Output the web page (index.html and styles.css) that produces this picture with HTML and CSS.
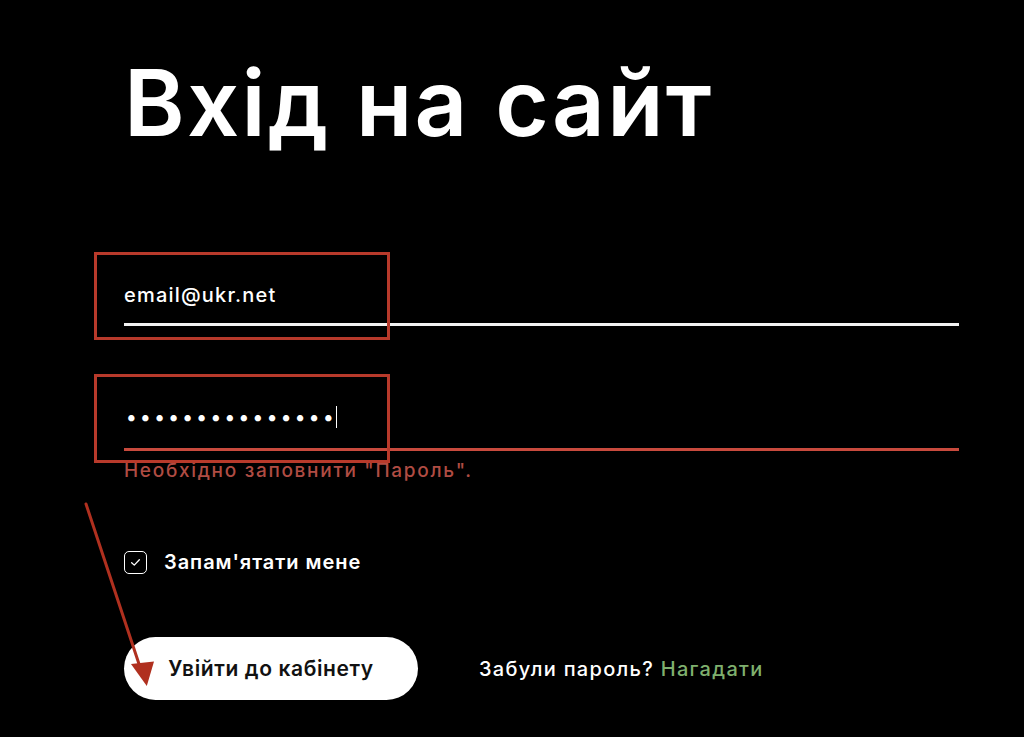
FILE: index.html
```html
<!DOCTYPE html>
<html lang="uk">
<head>
<meta charset="utf-8">
<title>Вхід на сайт</title>
<link rel="stylesheet" href="styles.css">
</head>
<body>
<main class="page">
  <h1 class="title">Вхід на сайт</h1>
  <form class="form">
    <div class="field">
      <span class="field-value">email@ukr.net</span>
    </div>
    <div class="field field-error">
      <span class="field-value password">•••••••••••••••<span class="caret"></span></span>
    </div>
    <p class="error-text">Необхідно заповнити "Пароль".</p>
    <label class="remember">
      <span class="checkbox">
        <svg viewBox="0 0 24 24" width="24" height="24"><path d="M7.6 12.2 L10.6 15 L16.4 8.9" fill="none" stroke="#fff" stroke-width="1.5" stroke-linecap="round" stroke-linejoin="round"/></svg>
      </span>
      <span class="remember-text">Запам'ятати мене</span>
    </label>
    <div class="actions">
      <button type="button" class="btn">Увійти до кабінету</button>
      <p class="forgot">Забули пароль? <a class="forgot-link" href="#">Нагадати</a></p>
    </div>
  </form>
</main>
<div class="annot annot-box annot-box-1"></div>
<div class="annot annot-box annot-box-2"></div>
<svg class="annot annot-arrow" width="1024" height="737" viewBox="0 0 1024 737">
  <line x1="86" y1="504" x2="139" y2="664" stroke="#b0301f" stroke-width="3" stroke-linecap="round"/>
  <polygon points="131,664 154,661.5 146.8,686" fill="#b0301f"/>
</svg>
</body>
</html>
```
FILE: styles.css
```css
html, body {
  margin: 0;
  padding: 0;
  background: #000;
}
body {
  width: 1024px;
  height: 737px;
  overflow: hidden;
  position: relative;
  font-family: Inter, "Noto Sans", "DejaVu Sans", sans-serif;
  color: #fff;
}
.page {
  padding: 0 65px 0 124px;
}
.title {
  margin: 57px 0 0 0;
  font-size: 92px;
  line-height: 92px;
  font-weight: 600;
  letter-spacing: 2.3px;
}
.form {
  margin-top: 134px;
}
.field {
  border-bottom: 3px solid #f2f2f2;
  padding-bottom: 16px;
}
.field-value {
  display: block;
  font-size: 20px;
  line-height: 24px;
  font-weight: 500;
  height: 24px;
  letter-spacing: 1.2px;
}
.field-error {
  margin-top: 79px;
  border-bottom-color: #c84a3d;
  padding-bottom: 19px;
}
.password {
  font-size: 20px;
  letter-spacing: 3.4px;
  padding-left: 2px;
  display: flex;
  align-items: center;
}
.caret {
  display: inline-block;
  width: 1.5px;
  height: 22px;
  background: #fff;
  margin-left: -1px;
}
.error-text {
  margin: 9px 0 0 0;
  font-size: 19px;
  line-height: 22px;
  color: #b04c43;
  font-weight: 500;
  letter-spacing: 1.7px;
}
.remember {
  margin-top: 68px;
  display: flex;
  align-items: center;
  gap: 17px;
}
.checkbox {
  width: 21px;
  height: 21px;
  border: 1.5px solid #fff;
  border-radius: 5px;
  display: flex;
  align-items: center;
  justify-content: center;
  box-sizing: content-box;
}
.checkbox svg {
  width: 21px;
  height: 21px;
}
.remember-text {
  font-size: 20px;
  font-weight: 600;
  line-height: 24px;
  letter-spacing: 0.95px;
}
.actions {
  margin-top: 63px;
  display: flex;
  align-items: center;
  gap: 61px;
}
.btn {
  width: 294px;
  height: 63px;
  border: 0;
  border-radius: 32px;
  background: #fff;
  color: #111;
  font-family: inherit;
  font-size: 21px;
  font-weight: 600;
  letter-spacing: 0.6px;
  padding: 0;
}
.forgot {
  margin: 0;
  font-size: 20px;
  font-weight: 500;
  line-height: 24px;
  letter-spacing: 1.3px;
}
.forgot-link {
  color: #7fb06e;
  text-decoration: none;
}
.annot {
  position: absolute;
  pointer-events: none;
}
.annot-box {
  border: 3px solid #b83a2b;
  left: 94px;
  width: 290px;
}
.annot-box-1 {
  top: 252px;
  height: 82px;
}
.annot-box-2 {
  top: 374px;
  height: 83px;
}
.annot-arrow {
  left: 0;
  top: 0;
}
```
